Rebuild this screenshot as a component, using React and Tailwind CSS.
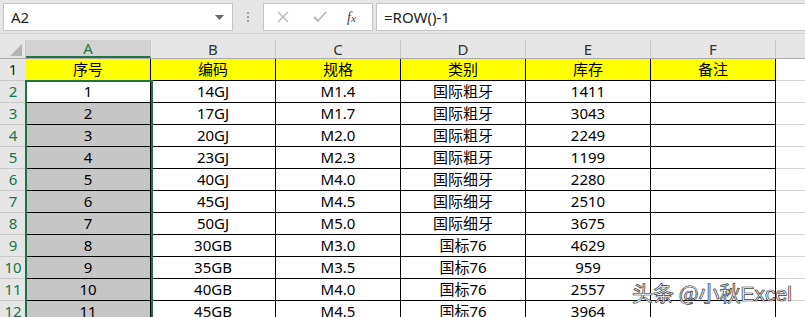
import React from 'react';

const columns = ['A', 'B', 'C', 'D', 'E', 'F'];
const header = ['序号', '编码', '规格', '类别', '库存', '备注'];

const rows = [
  ['1', '14GJ', 'M1.4', '国际粗牙', '1411'],
  ['2', '17GJ', 'M1.7', '国际粗牙', '3043'],
  ['3', '20GJ', 'M2.0', '国际粗牙', '2249'],
  ['4', '23GJ', 'M2.3', '国际粗牙', '1199'],
  ['5', '40GJ', 'M4.0', '国际细牙', '2280'],
  ['6', '45GJ', 'M4.5', '国际细牙', '2510'],
  ['7', '50GJ', 'M5.0', '国际细牙', '3675'],
  ['8', '30GB', 'M3.0', '国标76', '4629'],
  ['9', '35GB', 'M3.5', '国标76', '959'],
  ['10', '40GB', 'M4.0', '国标76', '2557'],
  ['11', '45GB', 'M4.5', '国标76', '3964'],
];

const font = { fontFamily: '"Noto Sans", "Noto Sans CJK SC", sans-serif' };

const Toolbar = () => (
  <div className="h-[34px] bg-[#e6e6e6] flex items-start pt-[3px] pl-[3px] border-b border-[#d4d4d4]">
    <div className="w-[230px] shrink-0 h-[28px] bg-white border border-[#c6c6c6] flex items-center justify-between pl-[7px] pr-[8px]">
      <span className="text-[15px] text-[#222]">A2</span>
      <svg width="9" height="5" viewBox="0 0 9 5"><path d="M0 0h9L4.5 5z" fill="#666" /></svg>
    </div>
    <div className="w-[30px] shrink-0 h-[28px] flex flex-col items-center justify-center gap-[2px]">
      <span className="w-[2px] h-[2px] bg-[#a0a0a0]" />
      <span className="w-[2px] h-[2px] bg-[#a0a0a0]" />
      <span className="w-[2px] h-[2px] bg-[#a0a0a0]" />
    </div>
    <div className="w-[110px] shrink-0 h-[28px] bg-white border border-[#c6c6c6] flex items-center pl-[13px]">
      <svg width="12" height="12" viewBox="0 0 12 12"><path d="M1 1l10 10M11 1L1 11" stroke="#b8b8b8" strokeWidth="1.4" /></svg>
      <svg width="14" height="12" viewBox="0 0 14 12" className="ml-[24px]"><path d="M1 6l4 4 8-9" stroke="#b8b8b8" strokeWidth="1.8" fill="none" /></svg>
      <span className="ml-[20px] text-[14px] italic text-[#444]" style={{ fontFamily: '"Liberation Serif", serif' }}>f<span className="text-[11px]">x</span></span>
    </div>
    <div className="ml-[3px] flex-1 h-[28px] bg-white border border-[#c6c6c6] border-r-0 flex items-center pl-[7px]">
      <span className="text-[15px] text-[#222]">=ROW()-1</span>
    </div>
  </div>
);

const ColumnHeader = () => (
  <div className="flex h-[19px] bg-[#e6e6e6] border-b border-[#ababab]">
    <div className="w-[26px] shrink-0 relative border-r border-[#c8c8c8]">
      <svg width="12" height="12" viewBox="0 0 12 12" className="absolute right-[3px] bottom-[2px]"><path d="M12 0v12H0z" fill="#b4b4b4" /></svg>
    </div>
    {columns.map((c, i) => (
      <div
        key={c}
        className={`w-[125px] shrink-0 flex items-center justify-center text-[15px] border-r border-[#c8c8c8] ${i === 0 ? 'bg-[#d2d2d2] text-[#217346] border-b-2 border-b-[#217346]' : 'text-[#333]'}`}
      >
        {c}
      </div>
    ))}
    <div className="flex-1" />
  </div>
);

const Row = ({ num, cells, top }) => (
  <div className="flex h-[22px]">
    <div className={`w-[26px] shrink-0 bg-[#e6e6e6] border-b border-[#c8c8c8] flex items-center justify-center text-[15px] ${top ? 'text-[#222]' : 'text-[#217346]'}`}>
      {num}
    </div>
    {cells.map((v, i) => {
      let bg = 'bg-white';
      if (top) bg = 'bg-[#ffff00]';
      else if (i === 0 && num !== 2) bg = 'bg-[#c6c6c6]';
      return (
        <div key={i} className={`w-[125px] shrink-0 ${bg} border-r border-b border-black flex items-center justify-center text-[15px] text-black`}>
          {v}
        </div>
      );
    })}
    <div className="flex-1 flex">
      <div className="w-[125px] shrink-0 border-r border-b border-[#d4d4d4]" />
    </div>
  </div>
);

export default function App() {
  return (
    <div className="w-[805px] h-[317px] overflow-hidden bg-white relative" style={font}>
      <Toolbar />
      <div className="h-[6px] bg-[#e6e6e6]" />
      <ColumnHeader />
      <div className="relative">
        <Row num={1} cells={header} top />
        {rows.map((r, i) => (
          <Row key={i} num={i + 2} cells={[...r, '']} />
        ))}
        <div className="absolute left-[25px] top-[21px] w-[128px] h-[260px] border-2 border-[#217346] pointer-events-none" />
      </div>
      <div
        className="absolute left-[632px] top-[282px] whitespace-nowrap text-[21px] leading-none text-white [-webkit-text-stroke:0.7px_#444] [text-shadow:0_0_1px_#888]"
        style={{ fontFamily: '"Noto Sans CJK SC", "Liberation Sans", sans-serif' }}
      >
        头条 @小秋<span style={{ fontFamily: '"Liberation Sans", sans-serif' }}>Excel</span>
      </div>
    </div>
  );
}
